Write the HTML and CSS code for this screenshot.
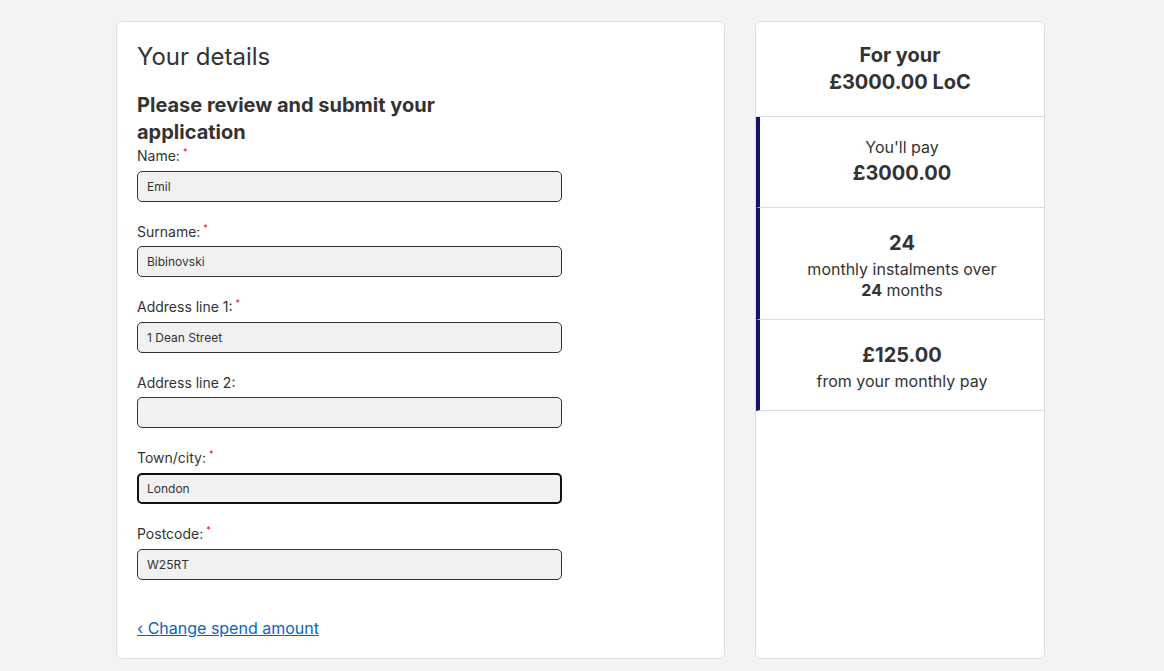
FILE: index.html
```html
<!DOCTYPE html>
<html lang="en">
<head>
  <meta charset="UTF-8" />
  <meta name="viewport" content="width=device-width, initial-scale=1.0" />
  <title>Your details</title>
  <link rel="stylesheet" href="styles.css">
</head>
<body>
  <div class="pagina">
    <div class="cartao formulario">
      <h1>Your details</h1>
      <h2>Please review and submit your application</h2>

      <div class="campo">
        <label for="nome">Name:<span class="obrigatorio">*</span></label>
        <input type="text" id="nome" value="Emil" />
      </div>

      <div class="campo">
        <label for="sobrenome">Surname:<span class="obrigatorio">*</span></label>
        <input type="text" id="sobrenome" value="Bibinovski" />
      </div>

      <div class="campo">
        <label for="endereco1">Address line 1:<span class="obrigatorio">*</span></label>
        <input type="text" id="endereco1" value="1 Dean Street" />
      </div>

      <div class="campo">
        <label for="endereco2">Address line 2:</label>
        <input type="text" id="endereco2" value="" />
      </div>

      <div class="campo">
        <label for="cidade">Town/city:<span class="obrigatorio">*</span></label>
        <input type="text" id="cidade" class="foco" value="London" />
      </div>

      <div class="campo">
        <label for="cep">Postcode:<span class="obrigatorio">*</span></label>
        <input type="text" id="cep" value="W25RT" />
      </div>

      <a class="voltar" href="#">&lsaquo; Change spend amount</a>
    </div>

    <div class="cartao resumo">
      <div class="resumo-topo">For your<br>£3000.00 LoC</div>
      <div class="resumo-linha">
        <div>You'll pay</div>
        <div class="destaque">£3000.00</div>
      </div>
      <div class="resumo-linha">
        <div class="destaque">24</div>
        <div>monthly instalments over</div>
        <div><b>24</b> months</div>
      </div>
      <div class="resumo-linha">
        <div class="destaque">£125.00</div>
        <div>from your monthly pay</div>
      </div>
    </div>
  </div>
</body>
</html>
```

FILE: styles.css
```css
body {
  margin: 0;
  background-color: #f3f3f3;
  font-family: Inter, "Noto Sans", sans-serif;
  color: #333;
}
.pagina {
  width: 929px;
  margin: 21px 0 0 116px;
  display: grid;
  grid-template-columns: 609px 290px;
  gap: 30px;
}
.cartao {
  background-color: #fff;
  border: 1px solid #ddd;
  border-radius: 6px;
}
.formulario {
  padding: 20px;
  display: flex;
  flex-direction: column;
}
h1 {
  margin: 0;
  font-size: 24px;
  font-weight: 400;
  line-height: 30px;
}
h2 {
  margin: 20px 0 0;
  max-width: 340px;
  font-size: 20px;
  font-weight: 700;
  line-height: 27px;
}
.campo {
  display: flex;
  flex-direction: column;
  margin-bottom: 20px;
}
label {
  font-size: 14px;
  line-height: 19.6px;
  height: 19.6px;
  margin-bottom: 5px;
}
.obrigatorio {
  position: relative;
  top: -6px;
  color: #e00;
  font-size: 9px;
  line-height: 0;
  margin-left: 3px;
}
input {
  width: 75%;
  height: 31px;
  box-sizing: border-box;
  padding: 0 9px;
  font-family: inherit;
  font-size: 12px;
  color: #333;
  background-color: #f1f1f1;
  border: 1px solid #333;
  border-radius: 5px;
  outline: none;
}
input.foco {
  border: 2px solid #111;
  padding: 0 8px;
}
.voltar {
  margin-top: 18px;
  font-size: 16px;
  line-height: 20px;
  color: #0a64c8;
  align-self: flex-start;
}
.resumo {
  overflow: hidden;
}
.resumo-topo {
  padding: 20px;
  text-align: center;
  font-size: 20px;
  font-weight: 700;
  line-height: 27px;
  border-bottom: 1px solid #ddd;
}
.resumo-linha {
  padding: 20px 10px 18px;
  text-align: center;
  font-size: 16px;
  line-height: 21px;
  border-left: 4px solid #13146b;
  border-bottom: 1px solid #ddd;
}
.destaque {
  font-size: 20px;
  font-weight: 700;
  line-height: 31px;
}
```
